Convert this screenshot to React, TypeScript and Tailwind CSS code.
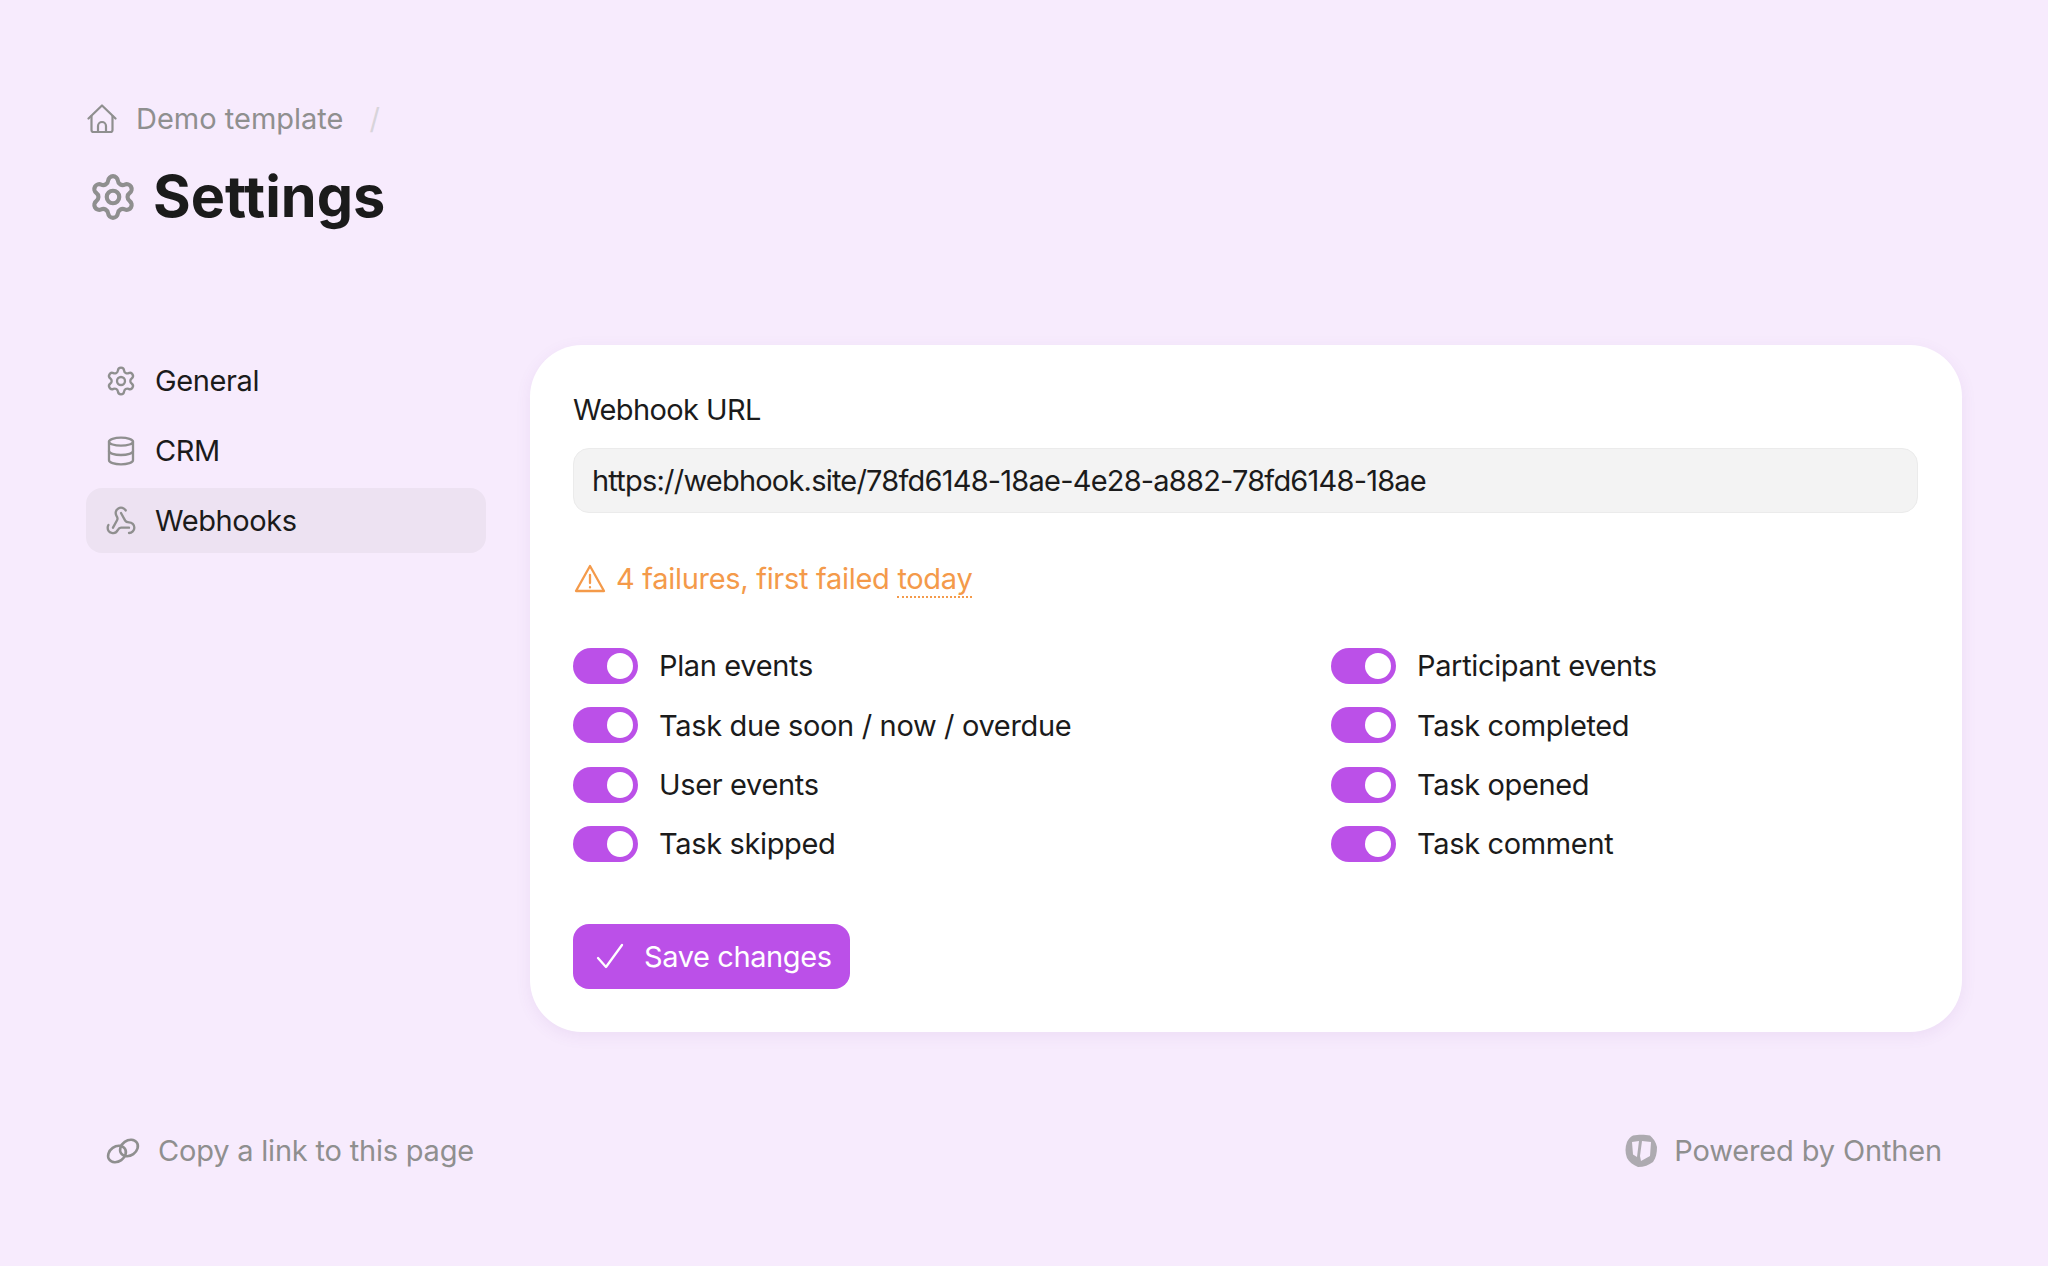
import React from "react";
import { Database, Settings, Webhook } from "lucide-react";

const leftEvents = ["Plan events", "Task due soon / now / overdue", "User events", "Task skipped"];
const rightEvents = ["Participant events", "Task completed", "Task opened", "Task comment"];

const HomeIcon = () => (
  <svg width="30" height="30" viewBox="0 0 30 30" fill="none" stroke="currentColor" strokeWidth="2.2" strokeLinecap="round" strokeLinejoin="round">
    <path d="M1.5 14.5 L15 1.5 L28.5 14.5" />
    <path d="M4.5 12 V26 a2 2 0 0 0 2 2 H23.5 a2 2 0 0 0 2 -2 V12" />
    <path d="M11 28 V22 a4 4 0 0 1 8 0 V28" />
  </svg>
);

const WarningIcon = () => (
  <svg width="32" height="32" viewBox="0 0 32 32" fill="none" stroke="currentColor" strokeWidth="2.3" strokeLinecap="round" strokeLinejoin="round">
    <path d="M16 3 L30 28 H2 Z" />
    <path d="M16 12 V20" />
    <path d="M16 24.2 V24.4" />
  </svg>
);

const CheckIcon = () => (
  <svg width="28" height="26" viewBox="0 0 28 26" fill="none" stroke="currentColor" strokeWidth="2.3" strokeLinecap="round" strokeLinejoin="round">
    <path d="M2 15 L10 24 L26 2" />
  </svg>
);

const LinkIcon = () => (
  <svg width="34" height="26" viewBox="0 0 34 26" fill="none" stroke="currentColor" strokeWidth="2.6">
    <ellipse cx="11" cy="16" rx="9.5" ry="7.5" transform="rotate(-35 11 16)" />
    <ellipse cx="23" cy="10" rx="9.5" ry="7.5" transform="rotate(-35 23 10)" />
  </svg>
);

const OnthenLogo = () => (
  <svg width="32" height="33" viewBox="0 0 32 33">
    <path
      d="M8 1.500 C13 .5 20 .5 25 1.500 C28 4 31 8 32 13 C32 19 31 24 28 28 C24 31 19 33 13 33 C8 31 4 28 2 24 C0 19 0 13 2 8 C3.500 5 5 3 8 1.500 Z M7 8 L14 7 L12 23 L8 20.500 Z M17 7 L26 8 L25 22 L16 27 L15 22 Z"
      fill="#adaab0"
      fillRule="evenodd"
    />
  </svg>
);

const Toggle = ({ label }: { label: string }) => {
  return (
    <div className="flex h-[36px] items-center gap-[21px]">
      <div className="flex h-[36px] w-[65px] items-center justify-end rounded-full bg-[#bb50e8] pr-[5px]">
        <div className="h-[26px] w-[26px] rounded-full bg-white"></div>
      </div>
      <span className="tracking-[-0.35px]">{label}</span>
    </div>
  );
};

const NavItem = ({ icon, label, active }: { icon: React.ReactNode; label: string; active?: boolean }) => {
  return (
    <div className={`flex h-[65px] items-center gap-[18px] rounded-[16px] pl-[19px] ${active ? "bg-[#ede2f2]" : ""}`}>
      <span className="text-[#8f8f8f]">{icon}</span>
      <span className="tracking-[-0.4px]">{label}</span>
    </div>
  );
};

export default function App() {
  return (
    <div className="flex h-[1266px] flex-col bg-[#f7ebfd] px-[86px] pt-[100px] font-['Inter',sans-serif] text-[29px] text-[#1b1b1b]">
      {/* Breadcrumb */}
      <div className="flex h-[38px] items-center text-[#8f8f8f]">
        <span className="ml-[1px]">
          <HomeIcon />
        </span>
        <span className="ml-[19px]">Demo template</span>
        <span className="ml-[26px] text-[#d8d4da]">/</span>
      </div>

      {/* Title */}
      <div className="mt-[29px] flex h-[60px] items-center">
        <Settings size={50} strokeWidth={2} className="ml-[2px] text-[#8f8f8f]" />
        <h1 className="ml-[15px] -translate-y-[1px] text-[57.6px] font-bold">Settings</h1>
      </div>

      <div className="mt-[118px] flex items-start gap-[44px]">
        {/* Sidebar */}
        <div className="mt-[3px] flex w-[400px] flex-col">
          <NavItem icon={<Settings size={32} strokeWidth={1.75} />} label="General" />
          <div className="mt-[5px]">
            <NavItem icon={<Database size={32} strokeWidth={1.75} />} label="CRM" />
          </div>
          <div className="mt-[5px]">
            <NavItem icon={<Webhook size={32} strokeWidth={1.75} />} label="Webhooks" active />
          </div>
        </div>

        {/* Card */}
        <div className="h-[687px] flex-1 rounded-[52px] bg-white px-[43px] pt-[43px] shadow-[0_4px_16px_rgba(120,60,150,0.08)]">
          <div className="mt-[4px] h-[36px] leading-[36px] tracking-[-0.6px]">Webhook URL</div>
          <div className="mt-[20px] flex h-[65px] w-[1345px] items-center rounded-[16px] border border-[#ebebeb] bg-[#f3f3f3] px-[18px] tracking-[-0.79px]">
            https://webhook.site/78fd6148-18ae-4e28-a882-78fd6148-18ae
          </div>

          <div className="mt-[46px] flex h-[40px] items-center text-[#f49a4a]">
            <span className="ml-[1px]">
              <WarningIcon />
            </span>
            <span className="ml-[10px] tracking-[-0.3px]">
              4 failures, first failed{" "}
              <span className="border-b-2 border-dotted border-[#f49a4a]">today</span>
            </span>
          </div>

          <div className="mt-[49px] grid grid-cols-[758px_1fr]">
            <div className="flex flex-col gap-[23.3px]">
              {leftEvents.map((event) => (
                <Toggle key={event} label={event} />
              ))}
            </div>
            <div className="flex flex-col gap-[23.3px]">
              {rightEvents.map((event) => (
                <Toggle key={event} label={event} />
              ))}
            </div>
          </div>

          <button className="mt-[62px] flex h-[65px] w-[277px] items-center rounded-[16px] bg-[#bb50e8] pl-[23px] text-white">
            <CheckIcon />
            <span className="ml-[20px] tracking-[-0.4px]">Save changes</span>
          </button>
        </div>
      </div>

      {/* Footer */}
      <div className="mt-[97px] flex items-center justify-between px-[20px] text-[#8f8f8f]">
        <div className="flex items-center gap-[18px]">
          <LinkIcon />
          <span className="tracking-[-0.2px]">Copy a link to this page</span>
        </div>
        <div className="flex items-center gap-[17px]">
          <OnthenLogo />
          <span className="tracking-[-0.15px]">Powered by Onthen</span>
        </div>
      </div>
    </div>
  );
}
